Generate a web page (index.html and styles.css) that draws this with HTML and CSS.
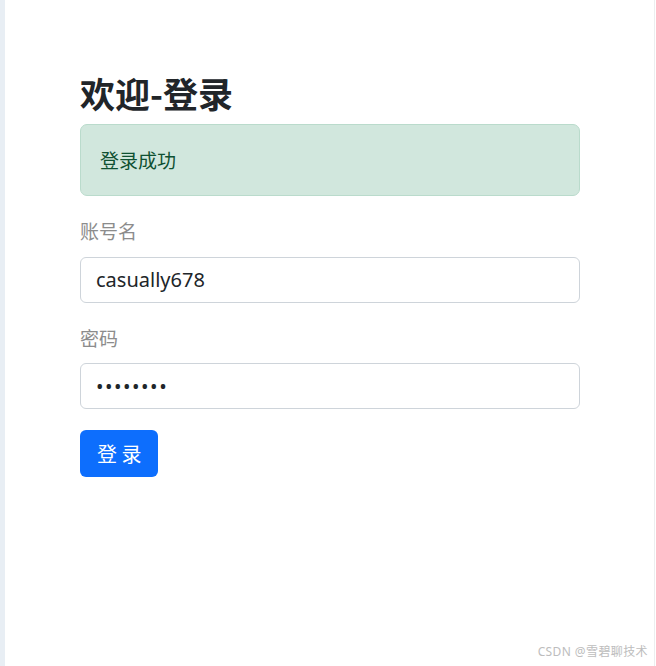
FILE: index.html
```html
<!DOCTYPE html>
<html lang="zh-CN">
<head>
    <meta charset="UTF-8">
    <meta name="viewport" content="width=device-width, initial-scale=1.0">
    <title>欢迎-登录</title>
    <link rel="stylesheet" href="styles.css">
</head>
<body>

<div class="page">
    <div class="side"></div>
    <div class="main">
        <div class="container">
            <h1>欢迎-登录</h1>
            <div class="alert">登录成功</div>
            <form id="loginForm">
                <label for="username">账号名</label>
                <input type="text" id="username" name="username" value="casually678">

                <label for="password">密码</label>
                <input type="password" id="password" name="password" value="12345678">

                <button type="submit">登 录</button>
            </form>
        </div>
    </div>
    <!-- 水印 -->
    <div class="watermark">CSDN @雪碧聊技术</div>
</div>

</body>
</html>
```

FILE: styles.css
```css
body {
    margin: 0;
    font-family: "Noto Sans", "Noto Sans CJK SC", sans-serif;
    color: #212529;
    background-color: #fff;
}
.page {
    position: relative;
    display: flex;
    height: 666px;
    overflow: hidden;
}
.side {
    width: 5px;
    background-color: #e8eef4;
}
.main {
    flex: 1;
    border-right: 1px solid #eceeef;
    margin-right: 1px;
    padding: 72px 0 0 75px;
}
.container {
    width: 500px;
}
h1 {
    margin: 0 0 11px;
    font-family: "Noto Sans CJK SC", sans-serif;
    font-size: 35px;
    font-weight: 700;
    line-height: 41px;
    color: #212529;
}
.alert {
    box-sizing: border-box;
    height: 72px;
    display: flex;
    align-items: center;
    padding: 0 19px;
    background-color: #d1e7dd;
    border: 1px solid #badbcc;
    border-radius: 7px;
    color: #0f5132;
    font-size: 19px;
}
label {
    display: block;
    margin: 22px 0 10.5px;
    font-size: 19px;
    line-height: 28px;
    color: #8c8c8c;
}
input {
    box-sizing: border-box;
    display: block;
    width: 100%;
    height: 46px;
    padding: 0 15px;
    border: 1px solid #ced4da;
    border-radius: 6px;
    font-family: "Noto Sans", "Noto Sans CJK SC", sans-serif;
    font-size: 20px;
    color: #212529;
    background-color: #fff;
}
input[type="password"] {
    letter-spacing: 1.5px;
}
button {
    margin-top: 21px;
    height: 47px;
    padding: 0 17px;
    border: none;
    border-radius: 6px;
    background-color: #0d6efd;
    color: #fff;
    font-family: "Noto Sans CJK SC", sans-serif;
    font-size: 20px;
    cursor: pointer;
}
.watermark {
    position: absolute;
    right: 8px;
    bottom: 6px;
    font-size: 12px;
    letter-spacing: 0.4px;
    color: #bdbdbd;
    font-family: "Noto Sans", "Noto Sans CJK SC", sans-serif;
}
```
